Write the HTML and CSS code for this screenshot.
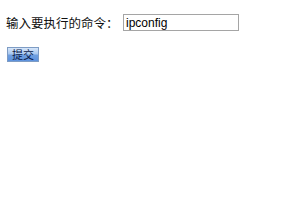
FILE: index.html
```html
<!DOCTYPE html>
<html lang="zh-CN">
<head>
    <meta charset="UTF-8">
    <title>执行命令</title>
    <link rel="stylesheet" href="styles.css">
</head>
<body>
    <form class="cmd-form" onsubmit="return false;">
        <div class="cmd-row">
            <label class="cmd-label" for="cmd">输入要执行的命令：</label>
            <input class="cmd-input" type="text" id="cmd" value="ipconfig">
        </div>
        <div class="cmd-actions">
            <button class="cmd-submit" type="submit">提交</button>
        </div>
    </form>
</body>
</html>
```
FILE: styles.css
```css
* {
    margin: 0;
    padding: 0;
    box-sizing: border-box;
}

body {
    background: #fff;
    font-family: 'Liberation Sans', 'Noto Sans CJK SC', sans-serif;
    color: #000;
}

.cmd-form {
    padding: 14px 0 0 6px;
}

.cmd-row {
    display: flex;
    align-items: center;
    height: 17px;
}

.cmd-label {
    font-size: 12.5px;
    width: 117px;
    color: #111;
}

.cmd-input {
    width: 116px;
    height: 17px;
    border: 1px solid #a5a5a5;
    font-family: 'Liberation Sans', sans-serif;
    font-size: 12px;
    padding: 0 2px;
    color: #000;
}

.cmd-actions {
    margin-top: 16px;
    padding-left: 1px;
}

.cmd-submit {
    display: block;
    width: 32px;
    height: 15px;
    font-family: 'Noto Sans CJK SC', sans-serif;
    font-size: 11px;
    line-height: 13px;
    color: #0a1a4a;
    border: 1px solid #7e9cc4;
    background: linear-gradient(#d6e6fa, #a9c8ef 45%, #6f9fe0 55%, #5d92de);
}
```
